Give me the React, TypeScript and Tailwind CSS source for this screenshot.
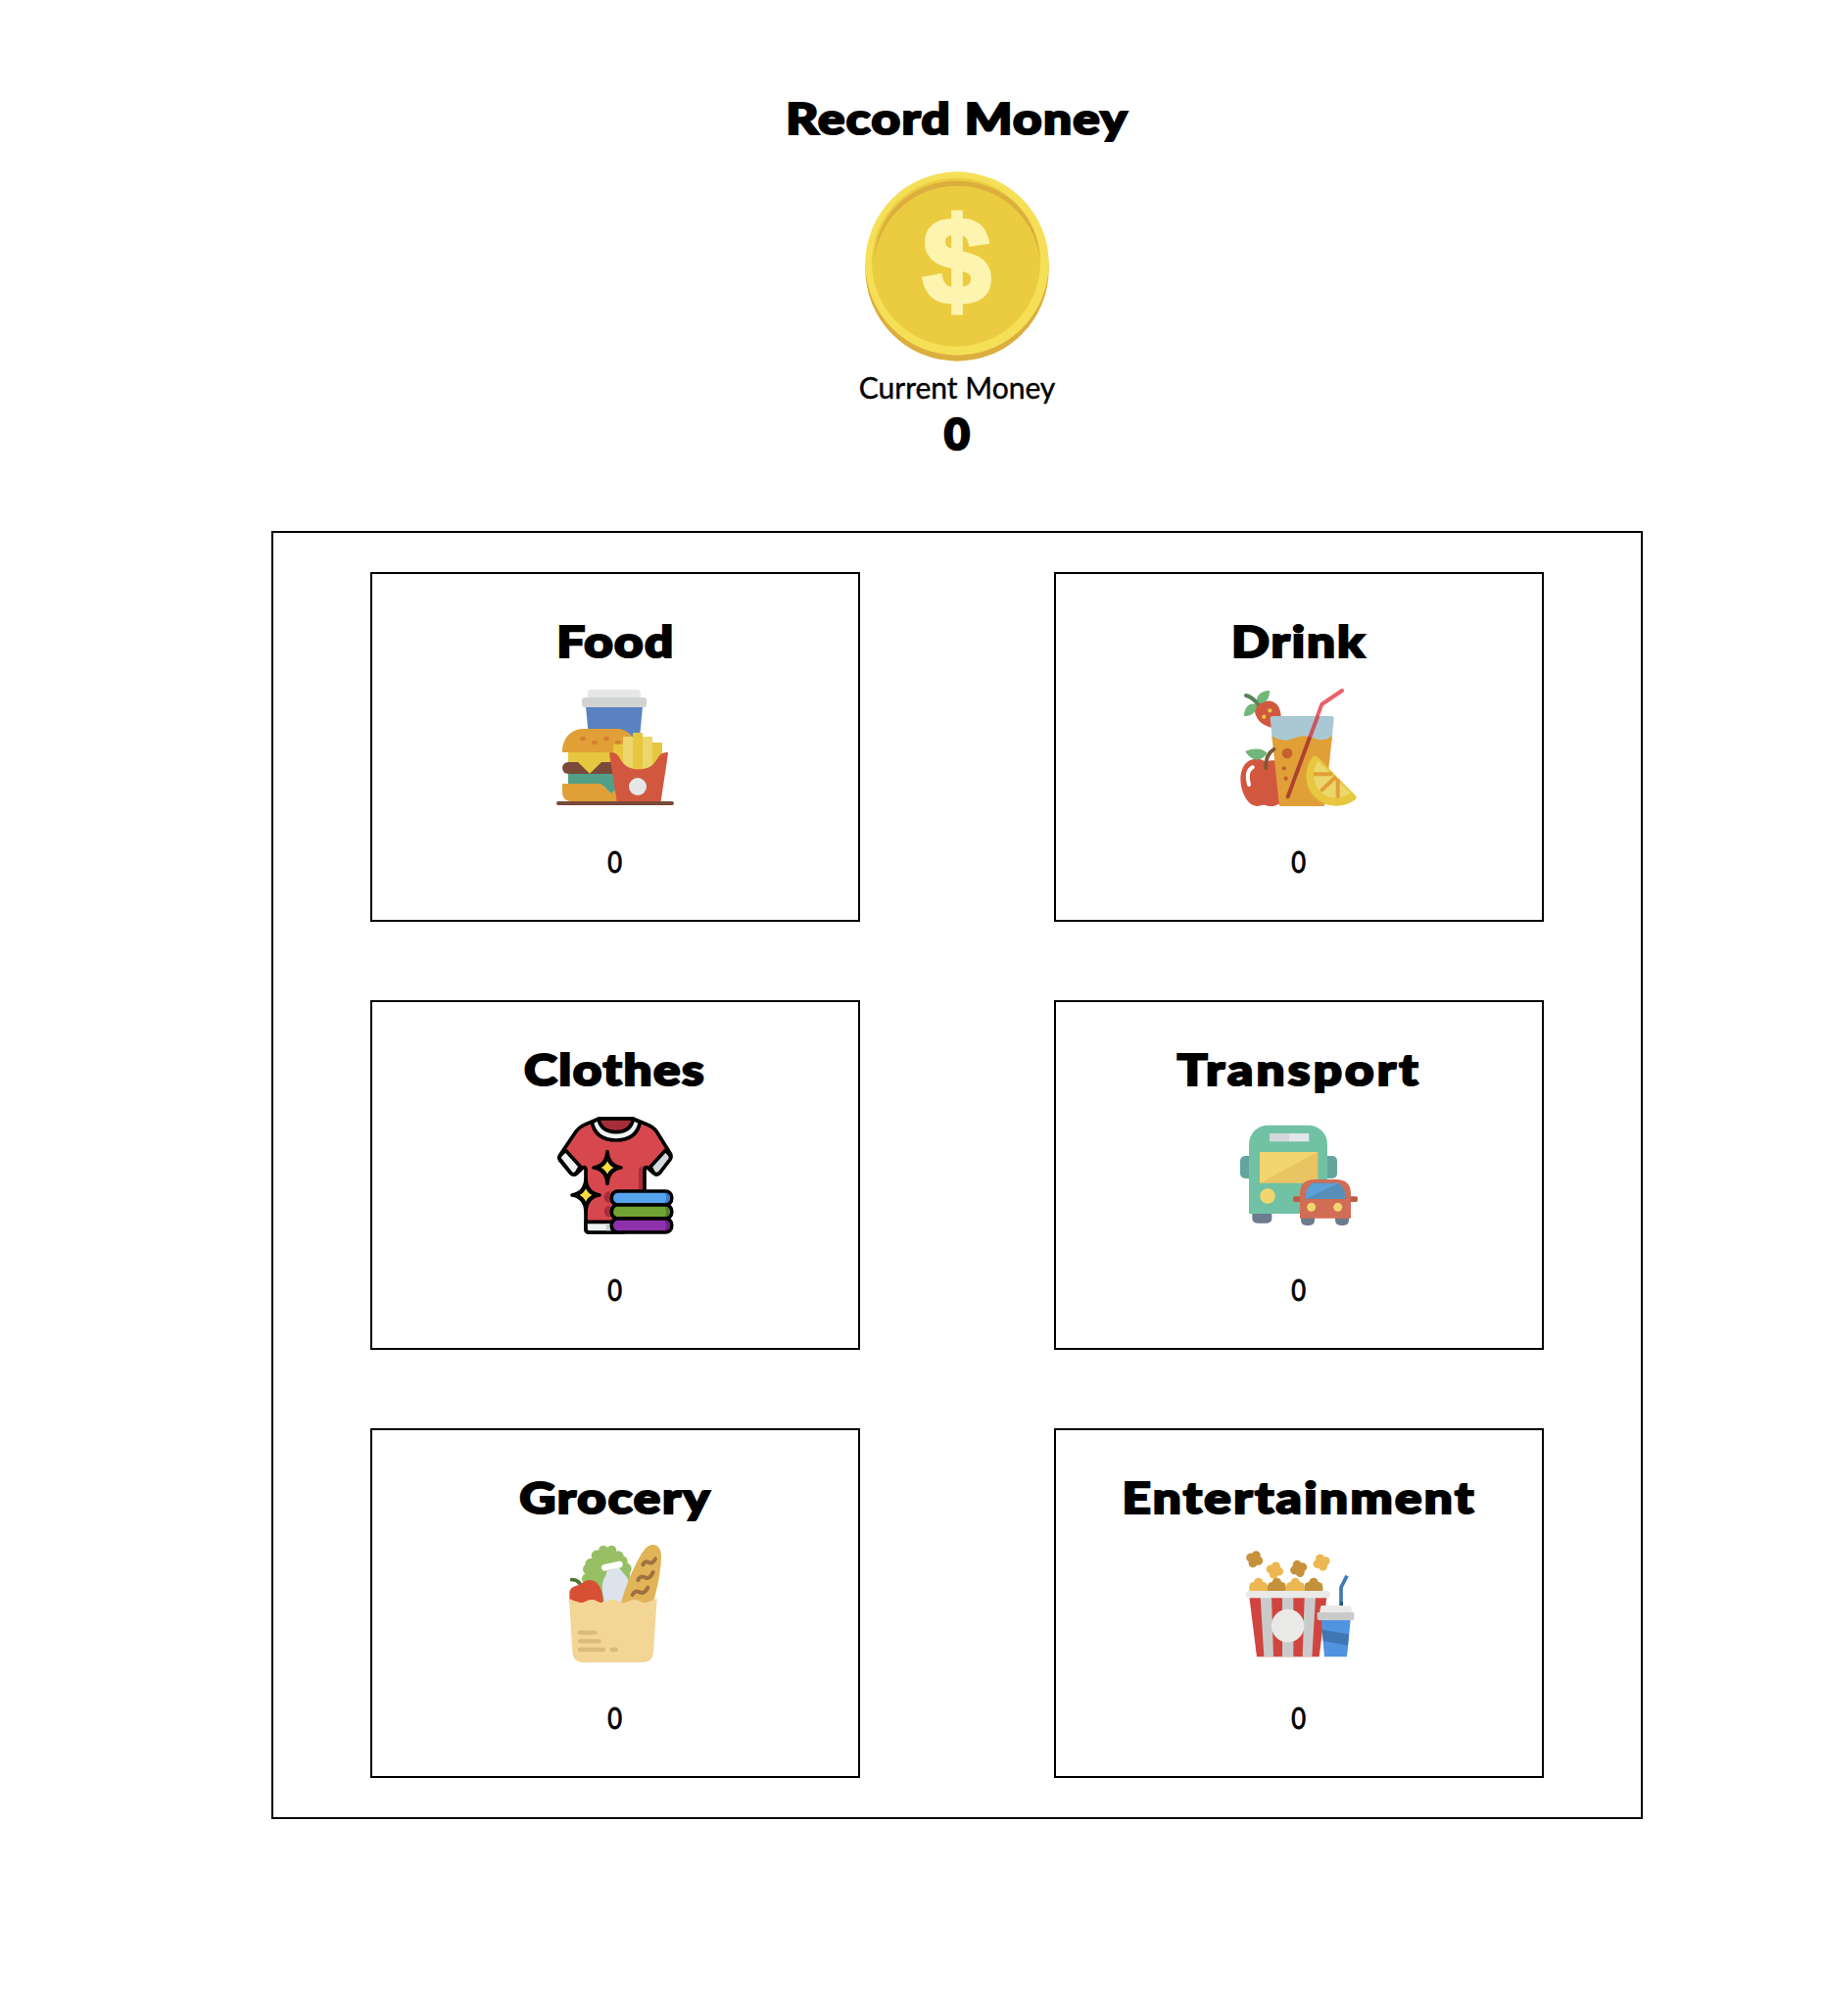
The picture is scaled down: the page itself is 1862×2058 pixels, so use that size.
import type { ReactNode } from "react";

function Coin() {
  return (
    <svg viewBox="291 277 600 600" className="mt-[24px] h-[200px] w-[200px] shrink-0">
      <ellipse cx="591" cy="586" rx="281" ry="281" fill="#dcae3e" />
      <circle cx="591" cy="568" r="281" fill="#f5df56" />
      <ellipse cx="588" cy="564" rx="258" ry="258" fill="#ebcc40" />
      <path d="M338 562C338 420 450 315 591 315S845 420 845 562C836 438 730 330 591 330S347 438 338 562Z" fill="#dcae3e" />
      <text
        x="590"
        y="690"
        textAnchor="middle"
        fontSize="372"
        fontWeight="700"
        fontFamily="Liberation Sans, sans-serif"
        fill="#fdf4b0"
        stroke="#fdf4b0"
        strokeWidth="15"
      >
        $
      </text>
    </svg>
  );
}

const food = (
  <svg viewBox="54 39 360 360" className="h-full w-full">
    <path d="M150 70V54Q150 42 162 42H300Q312 42 312 54V70Z" fill="#e6e7e8" />
    <path d="M144 94H318L309 190H153Z" fill="#5a82c0" />
    <rect x="132" y="66" width="198" height="30" rx="10" fill="#d1d3d1" />
    <rect x="90" y="230" width="150" height="40" fill="#e6c73f" />
    <rect x="90" y="296" width="150" height="40" fill="#529f87" />
    <path d="M72 234V228C72 192 100 162 134 162H240C274 162 302 192 302 234Z" fill="#e19f38" />
    <g fill="#d4822f">
      <ellipse cx="135" cy="192" rx="9" ry="6.5" />
      <ellipse cx="171" cy="204" rx="9" ry="6.5" />
      <ellipse cx="207" cy="192" rx="9" ry="6.5" />
      <ellipse cx="243" cy="204" rx="9" ry="6.5" />
    </g>
    <path d="M90 264H240V300H90A18 18 0 0 1 90 264Z" fill="#794a3a" />
    <path d="M119 263H193L156 299Z" fill="#e6c73f" />
    <path d="M76 330H190L222 360L240 345V385H96Q72 380 72 356V334Q72 330 76 330Z" fill="#e19f38" />
    <path d="M190 329H236V348L222 361Z" fill="#529f87" />
    <path d="M228 212Q228 209 231 209H262V280H228ZM344 204H375Q378 204 378 207V270H344Z" fill="#e6c73f" />
    <path d="M258 189Q258 186 261 186H290V290H258ZM316 186H345Q348 186 348 189V285H316Z" fill="#ebd76c" />
    <path d="M288 177Q288 174 291 174H315Q318 174 318 177V290H288Z" fill="#e6c73f" />
    <path d="M216 238Q217 234 222 234Q240 234 248 252C262 278 282 286 306 286S350 278 364 252Q373 234 392 234Q397 234 396 238L374 384H239Z" fill="#d1583f" />
    <circle cx="303" cy="339" r="27" fill="#e6e7e8" />
    <rect x="54" y="384" width="360" height="12" rx="6" fill="#794a3a" />
  </svg>
);

const drink = (
  <svg viewBox="48 39 360 360" className="h-full w-full">
    <path d="M102 87C122 70 154 74 164 92Q173 106 173 126L143 158C112 152 94 130 91 100Q92 92 102 87Z" fill="#d1583f" />
    <path d="M99 84C95 62 110 45 138 45C139 66 130 84 104 84ZM99 87C78 80 60 94 60 123C82 125 98 112 99 87Z" fill="#71b779" />
    <path d="M66 60Q84 64 101 85" fill="none" stroke="#5a8059" strokeWidth="12" strokeLinecap="round" />
    <circle cx="139" cy="106" r="6.5" fill="#e6c73f" />
    <circle cx="121" cy="125" r="6.5" fill="#e6c73f" />
    <path d="M126 263C112 251 82 250 66 267C43 290 44 342 66 376C78 396 95 402 111 397Q120 394 128 397Q144 402 158 396L172 390V264C154 256 138 258 126 263Z" fill="#d1583f" />
    <path d="M63 231C90 220 117 221 131 237C112 263 85 264 63 231Z" fill="#71b779" />
    <path d="M86 280C70 288 68 311 75 333" fill="none" stroke="#fff" strokeWidth="12" strokeLinecap="round" />
    <path d="M140 130Q140 123 147 123H328Q335 123 335 130L328 202H147Z" fill="#aac8d3" />
    <path d="M145 183C174 201 191 199 211 191C248 176 263 187 284 194Q306 201 330 182L307 396Q306 399 302 399H168Z" fill="#e19f38" />
    <path d="M127 282Q124 242 152 224" fill="none" stroke="#7a5935" strokeWidth="11" strokeLinecap="round" />
    <circle cx="192" cy="237" r="16" fill="#c6602c" />
    <circle cx="182" cy="283" r="6.5" fill="#c6602c" />
    <circle cx="188" cy="314" r="6.5" fill="#c6602c" />
    <path d="M360 45L298 87L285 122" fill="none" stroke="#e9616a" strokeWidth="12" strokeLinecap="round" strokeLinejoin="round" />
    <path d="M286 123L260 191" stroke="#cb5564" strokeWidth="12" />
    <path d="M260 191L194 370" stroke="#ad432e" strokeWidth="12" strokeLinecap="round" />
    <path d="M269 248Q277 242 285 248L401 366Q407 373 400 379C366 406 316 403 284 378C245 347 239 289 269 248Z" fill="#e6c73f" />
    <path d="M287 260L386 358C356 380 318 379 294 355C270 331 266 291 287 260Z" fill="#ebd76c" />
    <path d="M273 301H330M295 353L341 309M347 315V374" fill="none" stroke="#e19f38" strokeWidth="12" />
  </svg>
);

const clothes = (
  <svg viewBox="54 45 360 360" className="h-full w-full">
    <g stroke="#000" strokeWidth="11" strokeLinejoin="round" strokeLinecap="round">
      <path d="M184 51H288L325 66Q350 74 362 92L404 160Q407 168 401 176L371 216Q362 226 352 218L334 202Q325 196 324 206V300H260V399H154Q144 399 144 390V206Q143 196 134 202L116 219Q107 226 98 218L65 178Q60 170 65 163L110 96Q122 77 144 68Z" fill="#d7484e" />
      <path d="M82 148L127 197L116 216Q107 226 98 217L66 177Q61 170 66 163Z" fill="#f1f2f3" />
      <path d="M388 148L342 198L352 217Q361 226 371 216L401 177Q406 170 402 163Z" fill="#d3d9dd" />
      <path d="M144 367H235V399H154Q144 399 144 390Z" fill="#f1f2f3" />
      <path d="M163 62Q173 116 237 117Q300 116 310 62L288 51H184Z" fill="#f1f2f3" />
      <path d="M183 53Q191 91 237 92Q282 91 289 53L285 51H188Z" fill="#a72d3b" />
    </g>
    <path d="M318 196Q306 200 306 210V270H318Z" fill="#a72d3b" />
    <path d="M218 273A18 18 0 0 0 218 310ZM218 317A18 18 0 0 0 218 353Z" fill="#a72d3b" />
    <path d="M220 373H206V394H222Z" fill="#ccd1d5" />
    <g stroke="#000" strokeWidth="11" strokeLinejoin="round">
      <path d="M210 152Q213 195 252 201Q213 207 210 250Q207 207 168 201Q207 195 210 152Z" fill="#000" />
      <path d="M144 236Q147 279 186 285Q147 291 144 334Q141 291 102 285Q141 279 144 236Z" fill="#000" />
    </g>
    <path d="M210 181Q216 195 229 201Q216 207 210 221Q204 207 191 201Q204 195 210 181ZM144 265Q150 279 163 285Q150 291 144 305Q138 291 125 285Q138 279 144 265Z" fill="#f8dd3d" />
    <g stroke="#000" strokeWidth="11">
      <rect x="223" y="273" width="184" height="42" rx="19" fill="#57a4ee" />
      <rect x="223" y="315" width="184" height="42" rx="19" fill="#71a334" />
      <rect x="223" y="357" width="184" height="42" rx="19" fill="#8d32aa" />
    </g>
    <path d="M385 279Q402 280 402 294T385 310Q396 294 385 279Z" fill="#367dce" />
    <path d="M385 321Q402 322 402 336T385 352Q396 336 385 321Z" fill="#527e27" />
    <path d="M385 363Q402 364 402 378T385 393Q396 378 385 363Z" fill="#6b2388" />
  </svg>
);

const transport = (
  <svg viewBox="48 45 360 360" className="h-full w-full">
    <rect x="48" y="165" width="60" height="69" rx="15" fill="#65a69c" />
    <rect x="285" y="165" width="60" height="69" rx="15" fill="#65a69c" />
    <path d="M85 338H145V355Q145 371 129 371H101Q85 371 85 355Z" fill="#6c7b8e" />
    <path d="M75 342V129A58 58 0 0 1 133 71H257A58 58 0 0 1 315 129V342Z" fill="#71c2a4" />
    <path d="M138 96H198V121H138Z" fill="#d3d6da" />
    <path d="M198 96H259V121H198Z" fill="#e2e5e9" />
    <path d="M108 153H286V248H108Z" fill="#e8c463" />
    <path d="M108 153H286L108 248Z" fill="#f2d56f" />
    <circle cx="132" cy="288" r="23.5" fill="#f2d56f" />
    <path d="M210 295Q210 289 216 289H402Q408 289 408 295V300Q408 306 402 306H216Q210 306 210 300Z" fill="#be5b47" />
    <path d="M234 350H276V361Q276 378 259 378H251Q234 378 234 361ZM339 350H381V361Q381 378 364 378H356Q339 378 339 361Z" fill="#6c7b8e" />
    <path d="M231 356V281Q231 237 277 237H341Q387 237 387 281V356Z" fill="#d16c55" />
    <path d="M248 297V288Q250 263 269 248H350Q369 263 371 288V297Z" fill="#5690b8" />
    <path d="M248 297V288Q250 263 269 248H350L248 297Z" fill="#5ca0d8" />
    <circle cx="266" cy="322" r="13.5" fill="#f2d56f" />
    <circle cx="347" cy="322" r="13.5" fill="#f2d56f" />
  </svg>
);

const grocery = (
  <svg viewBox="54 45 360 360" className="h-full w-full">
    <g fill="#97c065">
      <circle cx="198" cy="62" r="15" />
      <circle cx="223" cy="62" r="15" />
      <circle cx="178" cy="78" r="17" />
      <circle cx="244" cy="80" r="16" />
      <circle cx="160" cy="104" r="18" />
      <circle cx="256" cy="95" r="16" />
      <circle cx="152" cy="120" r="17" />
      <circle cx="151" cy="150" r="19" />
      <circle cx="266" cy="118" r="18" />
      <path d="M150 100L190 62H235L282 112L270 220H190L140 165Z" />
    </g>
    <path d="M101 152Q122 151 130 172" fill="none" stroke="#4d7430" strokeWidth="11" strokeLinecap="round" />
    <path d="M94 220V193C94 177 110 171 122 168Q131 164 138 158C155 147 177 154 187 174Q200 200 195 225H100Z" fill="#d75036" />
    <path d="M208 125L246 114Q251 124 260 133C285 155 279 190 264 225H203C193 188 191 169 200 148Q208 137 208 125Z" fill="#dce3ec" />
    <path d="M202 115L247 105" stroke="#fff" strokeWidth="20" strokeLinecap="round" />
    <path d="M252 222C265 177 285 125 306 88C320 61 333 44 350 45C368 46 376 61 375 85C373 136 361 184 350 225H252Z" fill="#e1b457" />
    <g fill="none" stroke="#9f7142" strokeWidth="12" strokeLinecap="round">
      <path d="M319 106Q324 93 336 99T357 88" />
      <path d="M304 153Q309 138 325 145T350 129" />
      <path d="M287 198Q294 183 308 190T334 176" />
    </g>
    <path d="M93 210Q109 218 127 222C145 223 148 211 163 213C179 214 182 223 195 222C211 219 215 213 226 213C241 214 247 223 261 222C277 220 279 213 293 213C309 213 311 223 328 222Q341 218 362 209L351 376Q348 405 318 405H134Q105 404 103 374Z" fill="#f3d596" />
    <path d="M126 314H172M126 340H185M126 366H198M224 366H237" stroke="#dabb7e" strokeWidth="13" strokeLinecap="round" />
  </svg>
);

function Kernel({ x, y, turn, fill }: { x: number; y: number; turn: number; fill: string }) {
  return (
    <g transform={`translate(${x} ${y}) rotate(${turn})`} fill={fill}>
      <circle cx="0" cy="0" r="15" />
      <circle cx="-13" cy="0" r="13.5" />
      <circle cx="13" cy="0" r="13.5" />
      <circle cx="0" cy="-13" r="13.5" />
      <circle cx="0" cy="13" r="13.5" />
    </g>
  );
}

function Puff({ x, fill }: { x: number; fill: string }) {
  return (
    <g fill={fill}>
      <circle cx={x} cy="160" r="14" />
      <circle cx={x - 14} cy="173" r="14" />
      <circle cx={x + 14} cy="173" r="14" />
      <rect x={x - 28} y="174" width="56" height="14" />
    </g>
  );
}

const entertainment = (
  <svg viewBox="48 45 360 360" className="h-full w-full">
    <Kernel x={92} y={89} turn={22} fill="#c5913a" />
    <Kernel x={154} y={123} turn={14} fill="#edb853" />
    <Kernel x={227} y={118} turn={-20} fill="#c5913a" />
    <Kernel x={297} y={99} turn={-20} fill="#edb853" />
    <Puff x={104} fill="#edb853" />
    <Puff x={160} fill="#c5913a" />
    <Puff x={217} fill="#edb853" />
    <Puff x={273} fill="#c5913a" />
    <path d="M76 205H313L290 388H99Z" fill="#d0453f" />
    <path d="M110 205H144L150 388H121ZM177 205H211V388H177ZM245 205H279L268 388H239Z" fill="#cacaca" />
    <rect x="66" y="186" width="257" height="22" rx="10" fill="#e9e9e7" />
    <circle cx="194" cy="293" r="50.5" fill="#e9e9e7" />
    <path d="M357 220V175L375 140" fill="none" stroke="#4078b8" strokeWidth="11" />
    <path d="M352 219H363V232H352Z" fill="#285683" />
    <path d="M296 231H384Q389 236 391 254H291Q293 238 296 231Z" fill="#e9e9e7" />
    <path d="M296 274H386L375 388H306Z" fill="#4f93e1" />
    <path d="M299 305L381 319L378 353L302 339Z" fill="#4076b2" />
    <path d="M284 252H397V270Q397 276 391 276H290Q284 276 284 270Z" fill="#cacaca" />
  </svg>
);

type Category = { name: string; spacing: string; icon: ReactNode };

const categories: Category[] = [
  { name: "Food", spacing: "tracking-[1.2px]", icon: food },
  { name: "Drink", spacing: "tracking-[1.7px]", icon: drink },
  { name: "Clothes", spacing: "tracking-[1.4px]", icon: clothes },
  { name: "Transport", spacing: "tracking-[2.8px]", icon: transport },
  { name: "Grocery", spacing: "tracking-[1.6px]", icon: grocery },
  { name: "Entertainment", spacing: "tracking-[2.1px]", icon: entertainment },
];

const heading =
  "text-[44.5px] leading-[56px] font-black whitespace-nowrap scale-x-115 [-webkit-text-stroke:2.2px_black]";

function Card({ name, spacing, icon }: Category) {
  return (
    <div className="flex h-[357px] w-[500px] flex-col items-center border-2 border-black pt-10">
      <h2 className={`${heading} ${spacing}`}>{name}</h2>
      <div className="mt-[21px] h-[120px] w-[120px] shrink-0">{icon}</div>
      <p className="mt-[38px] scale-x-85 text-[30px] leading-9 [-webkit-text-stroke:0.9px_black]">0</p>
    </div>
  );
}

export default function App() {
  return (
    <main className="flex min-h-[2058px] flex-col items-center bg-white pt-[92px] pl-[92px] font-['Lato',sans-serif] text-black">
      <h1 className={`${heading} tracking-[1.2px]`}>Record Money</h1>
      <Coin />
      <p className="mt-[5px] text-[30px] leading-9 [-webkit-text-stroke:0.4px_black]">Current Money</p>
      <p className="mt-px text-[44.5px] leading-[56px] font-black [-webkit-text-stroke:2.6px_black]">0</p>
      <section className="mt-[72px] flex w-[1400px] flex-wrap justify-around gap-y-20 border-2 border-black py-10">
        {categories.map((c) => (
          <Card key={c.name} {...c} />
        ))}
      </section>
    </main>
  );
}
